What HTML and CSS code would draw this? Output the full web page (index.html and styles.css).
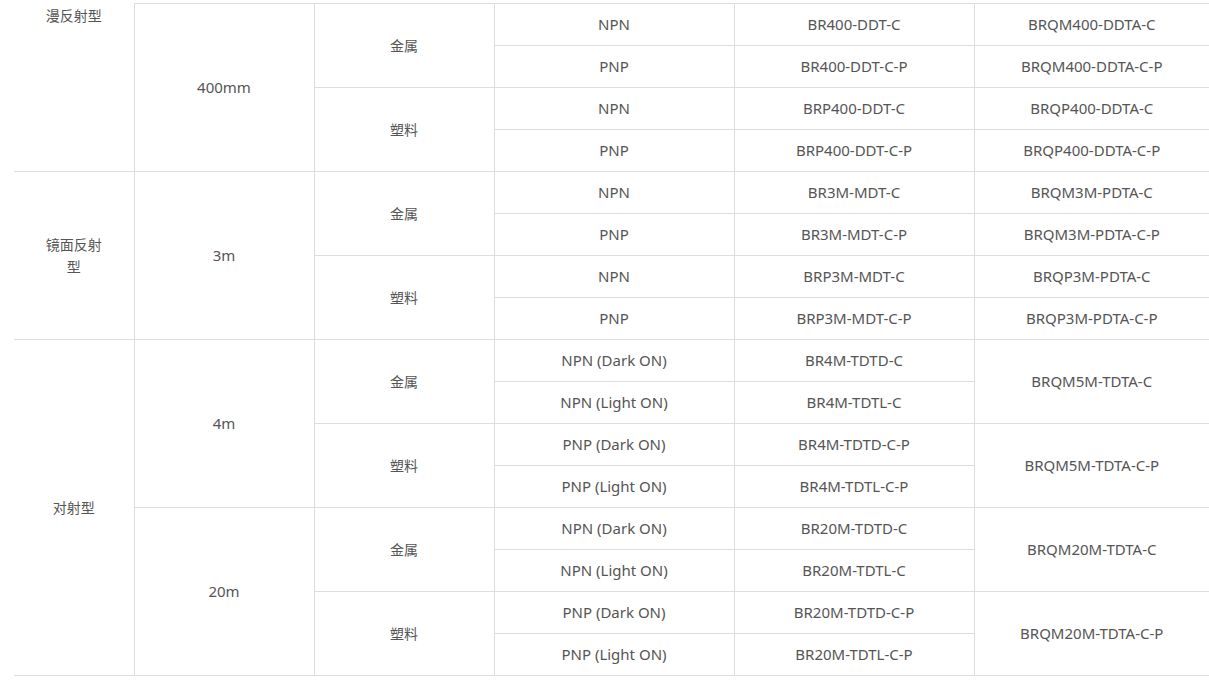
FILE: index.html
```html
<!DOCTYPE html>
<html lang="zh-CN">
<head>
<meta charset="utf-8">
<title>光电传感器型号表</title>
<link rel="stylesheet" href="styles.css">
</head>
<body>
<table class="spec">
  <colgroup>
    <col class="c-type"><col class="c-dist"><col class="c-mat"><col class="c-out"><col class="c-m1"><col class="c-m2">
  </colgroup>
  <tbody>
    <tr><td rowspan="4" class="first top zh">漫反射型</td><td rowspan="4">400mm</td><td rowspan="2" class="zh">金属</td><td>NPN</td><td>BR400-DDT-C</td><td class="last">BRQM400-DDTA-C</td></tr>
    <tr><td>PNP</td><td>BR400-DDT-C-P</td><td class="last">BRQM400-DDTA-C-P</td></tr>
    <tr><td rowspan="2" class="zh">塑料</td><td>NPN</td><td>BRP400-DDT-C</td><td class="last">BRQP400-DDTA-C</td></tr>
    <tr><td>PNP</td><td>BRP400-DDT-C-P</td><td class="last">BRQP400-DDTA-C-P</td></tr>

    <tr><td rowspan="4" class="first zh">镜面反射型</td><td rowspan="4">3m</td><td rowspan="2" class="zh">金属</td><td>NPN</td><td>BR3M-MDT-C</td><td class="last">BRQM3M-PDTA-C</td></tr>
    <tr><td>PNP</td><td>BR3M-MDT-C-P</td><td class="last">BRQM3M-PDTA-C-P</td></tr>
    <tr><td rowspan="2" class="zh">塑料</td><td>NPN</td><td>BRP3M-MDT-C</td><td class="last">BRQP3M-PDTA-C</td></tr>
    <tr><td>PNP</td><td>BRP3M-MDT-C-P</td><td class="last">BRQP3M-PDTA-C-P</td></tr>

    <tr><td rowspan="8" class="first zh">对射型</td><td rowspan="4">4m</td><td rowspan="2" class="zh">金属</td><td>NPN (Dark ON)</td><td>BR4M-TDTD-C</td><td rowspan="2" class="last">BRQM5M-TDTA-C</td></tr>
    <tr><td>NPN (Light ON)</td><td>BR4M-TDTL-C</td></tr>
    <tr><td rowspan="2" class="zh">塑料</td><td>PNP (Dark ON)</td><td>BR4M-TDTD-C-P</td><td rowspan="2" class="last">BRQM5M-TDTA-C-P</td></tr>
    <tr><td>PNP (Light ON)</td><td>BR4M-TDTL-C-P</td></tr>
    <tr><td rowspan="4">20m</td><td rowspan="2" class="zh">金属</td><td>NPN (Dark ON)</td><td>BR20M-TDTD-C</td><td rowspan="2" class="last">BRQM20M-TDTA-C</td></tr>
    <tr><td>NPN (Light ON)</td><td>BR20M-TDTL-C</td></tr>
    <tr><td rowspan="2" class="zh">塑料</td><td>PNP (Dark ON)</td><td>BR20M-TDTD-C-P</td><td rowspan="2" class="last">BRQM20M-TDTA-C-P</td></tr>
    <tr><td>PNP (Light ON)</td><td>BR20M-TDTL-C-P</td></tr>
  </tbody>
</table>
</body>
</html>
```

FILE: styles.css
```css
html, body {
  margin: 0;
  padding: 0;
  background: #fff;
}
body {
  font-family: "Noto Sans", "Noto Sans CJK SC", sans-serif;
  font-size: 14px;
  color: #555;
}
.spec {
  border-collapse: collapse;
  table-layout: fixed;
  width: 1195px;
  margin: 3px 0 0 14px;
}
.c-type { width: 120px; }
.c-dist { width: 180px; }
.c-mat { width: 180px; }
.c-out { width: 240px; }
.c-m1 { width: 240px; }
.c-m2 { width: 235px; }
.spec tr { height: 42px; }
.spec td {
  border: 1px solid #ddd;
  padding: 0 28px 2px;
  text-align: center;
  vertical-align: middle;
  font-size: 15px;
  line-height: 22px;
}
.spec td.zh {
  font-size: 14px;
  padding-bottom: 0;
}
.spec td.first { border-left: hidden; }
.spec td.last { border-right: hidden; }
.spec td.top {
  border-top: hidden;
  vertical-align: top;
  padding-top: 1px;
}
```
